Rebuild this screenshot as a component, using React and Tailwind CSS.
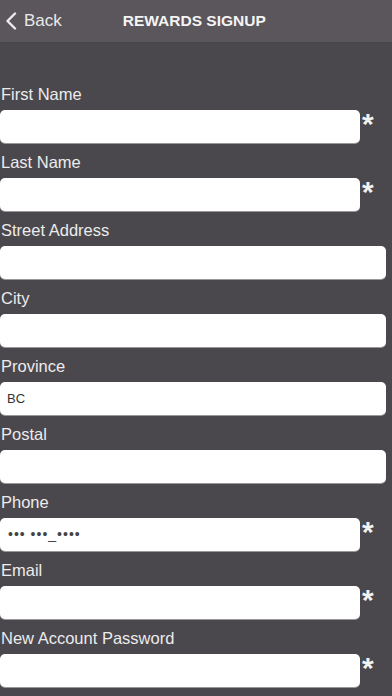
const fields = [
  { label: "First Name", required: true },
  { label: "Last Name", required: true },
  { label: "Street Address" },
  { label: "City" },
  { label: "Province", value: "BC" },
  { label: "Postal" },
  { label: "Phone", required: true, mask: "••• •••_••••" },
  { label: "Email", required: true },
  { label: "New Account Password", required: true },
];

function Field({ label, required, value, mask }) {
  return (
    <div className="flex flex-col">
      <div className="h-6 leading-6 text-[16.5px] text-[#ececec] pl-[1px]">{label}</div>
      <div className="mt-1 flex items-start">
        <div
          className={
            (required ? "w-[360px]" : "flex-1 mr-[6px]") +
            " h-[33px] bg-white rounded-[5px] shadow-[0_1px_0_#9a979c] flex items-center pl-[7px]"
          }
        >
          {value && <span className="text-[13px] text-[#333]">{value}</span>}
          {mask && <span className="text-[14px] text-[#444] tracking-[1px] pl-[1px]">{mask}</span>}
        </div>
        {required && (
          <span className="ml-[1px] w-[31px] font-bold text-[30px] leading-none text-[#f2f2f2] pl-[1px] -mt-[1px]">
            *
          </span>
        )}
      </div>
      <div className="h-[7px]" />
    </div>
  );
}

export default function App() {
  return (
    <div className="w-[392px] h-[696px] overflow-hidden bg-[#4a474d] font-['Liberation_Sans',Arial,sans-serif]">
      <div className="h-[43px] bg-[#5b565c] border-b border-[#47444a] flex items-center">
        <button className="flex items-center pl-[5px] text-[#e9e9e9] text-[17px]">
          <svg width="12" height="18" viewBox="0 0 12 18" fill="none">
            <path d="M10 1.5 L2.5 9 L10 16.5" stroke="#ececec" strokeWidth="2.4" strokeLinecap="round" strokeLinejoin="round" />
          </svg>
          <span className="ml-[7px]">Back</span>
        </button>
        <h1 className="ml-[61px] text-[15.5px] font-bold text-[#f4f4f4]">REWARDS SIGNUP</h1>
      </div>
      <div className="pt-[39px]">
        {fields.map((f) => (
          <Field key={f.label} {...f} />
        ))}
      </div>
    </div>
  );
}
